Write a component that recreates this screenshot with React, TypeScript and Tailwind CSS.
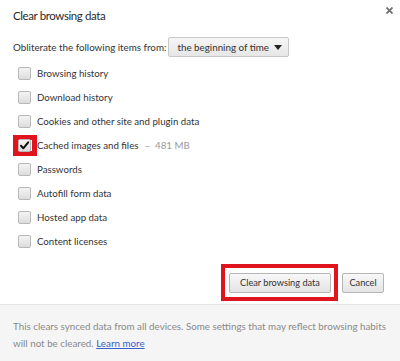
import React from "react";

const items: { label: string; checked?: boolean; extra?: string }[] = [
  { label: "Browsing history" },
  { label: "Download history" },
  { label: "Cookies and other site and plugin data" },
  { label: "Cached images and files", checked: true, extra: "481 MB" },
  { label: "Passwords" },
  { label: "Autofill form data" },
  { label: "Hosted app data" },
  { label: "Content licenses" },
];

function Checkbox({ checked }: { checked?: boolean }) {
  return (
    <div className="relative w-[13px] h-[13px] shrink-0">
      {checked && (
        <span className="absolute -left-[5px] -right-[6px] -top-[4px] -bottom-[4px] border-[5px] border-[#e0141e]" />
      )}
      <div className="relative w-[13px] h-[13px] rounded-[2px] border border-[#b8b8b8] bg-gradient-to-b from-[#f4f4f4] to-[#dcdcdc] flex items-center justify-center">
        {checked && (
          <svg width="11" height="11" viewBox="0 0 11 11">
            <path d="M2 5.8 L4.3 8.3 L9.2 2.3" fill="none" stroke="#111" strokeWidth="2" strokeLinecap="round" strokeLinejoin="round" />
          </svg>
        )}
      </div>
    </div>
  );
}

export default function App() {
  return (
    <div
      className="w-[400px] h-[361px] bg-white flex flex-col text-[#333] whitespace-nowrap"
      style={{ fontFamily: 'Lato, "Open Sans", sans-serif' }}
    >
      <div className="flex items-start justify-between pl-[13px] pr-[7px] pt-[6px] h-[30px]">
        <div className="text-[11.5px] tracking-[-0.4px] leading-[20px] text-[#2a2a2a]">Clear browsing data</div>
        <svg width="7" height="7" viewBox="0 0 7 7" className="mt-[1px]">
          <path d="M0.5 0.5 L6.5 6.5 M6.5 0.5 L0.5 6.5" stroke="#6f6f6f" strokeWidth="1.8" />
        </svg>
      </div>
      <div className="flex items-center pl-[13px] mt-[7px] h-[20px]">
        <span className="text-[9.8px] text-[#333]">Obliterate the following items from:</span>
        <div className="ml-[2px] w-[121px] h-[20px] border border-[#c8c8c8] rounded-[2px] bg-gradient-to-b from-[#f6f6f6] to-[#e6e6e6] flex items-center justify-between pl-[8px] pr-[6px]">
          <span className="text-[9.8px] text-[#333]">the beginning of time</span>
          <svg width="8" height="5" viewBox="0 0 8 5">
            <path d="M0 0 L8 0 L4 5 Z" fill="#222" />
          </svg>
        </div>
      </div>
      <div className="flex flex-col mt-[4px]">
        {items.map((it) => (
          <div key={it.label} className="flex items-center h-[24px] pl-[18px]">
            <Checkbox checked={it.checked} />
            <span className="ml-[6px] text-[9.7px] text-[#333]">{it.label}</span>
            {it.extra && (
              <span className="ml-[6px] text-[9.7px] text-[#999]">–&nbsp; {it.extra}</span>
            )}
          </div>
        ))}
      </div>
      <div className="flex justify-end items-start gap-[11px] pr-[16px] mt-[20px] h-[31px]">
        <button className="relative h-[20px] w-[102px] border border-[#b5b5b5] rounded-[2px] bg-gradient-to-b from-[#f8f8f8] to-[#e4e4e4] text-[9.2px] text-[#333]">
          <span className="absolute -left-[9px] -right-[8px] -top-[10px] -bottom-[9px] border-[4px] border-[#e0141e]" />
          Clear browsing data
        </button>
        <button className="h-[20px] w-[42px] border border-[#b5b5b5] rounded-[2px] bg-gradient-to-b from-[#f8f8f8] to-[#e4e4e4] text-[9.2px] text-[#333]">
          Cancel
        </button>
      </div>
      <div className="flex-1 bg-[#f5f5f5] border-t border-[#e4e4e4] pl-[13px] pr-[6px] pt-[13px] text-[9.8px] leading-[17px] text-[#8a8a8a] whitespace-normal">
        <span>This clears synced data from all devices. Some settings that may reflect browsing habits will not be cleared.</span>{" "}
        <span className="text-[#3a5fc8] underline">Learn more</span>
      </div>
    </div>
  );
}
